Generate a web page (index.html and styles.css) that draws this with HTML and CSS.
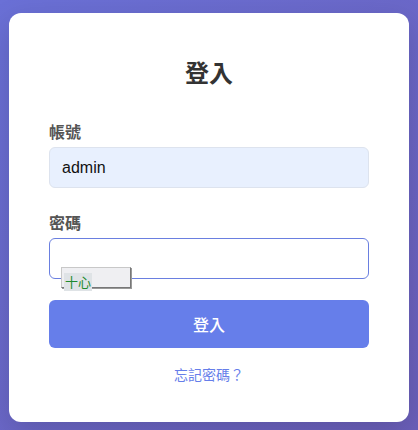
FILE: index.html
```html
<!DOCTYPE html>
<html lang="zh-Hant">
<head>
<meta charset="utf-8">
<title>登入</title>
<link rel="stylesheet" href="styles.css">
</head>
<body>
<div class="card">
  <h1 class="title">登入</h1>
  <div class="group">
    <label class="label">帳號</label>
    <div class="input autofill">admin</div>
  </div>
  <div class="group pw">
    <label class="label">密碼</label>
    <div class="input focus"></div>
    <div class="ime"><span class="ime-text">十心</span></div>
  </div>
  <div class="btn">登入</div>
  <div class="forgot"><a class="link">忘記密碼？</a></div>
</div>
</body>
</html>
```
FILE: styles.css
```css
* { box-sizing: border-box; }
html, body { margin: 0; padding: 0; }
body {
  width: 418px;
  height: 430px;
  overflow: hidden;
  background: linear-gradient(135deg, #6a70d6 0%, #6b5fba 100%);
  font-family: "Noto Sans CJK TC", "Noto Sans", sans-serif;
  padding: 13px 9px 0 9px;
}
.card {
  width: 400px;
  height: 409px;
  background: #fff;
  border-radius: 12px;
  padding: 40px 40px 0 40px;
  box-shadow: 0 10px 30px rgba(0,0,0,0.15);
}
.title {
  margin: 0;
  text-align: center;
  font-size: 24px;
  font-weight: 700;
  color: #333;
  line-height: 38px;
}
.group { margin-top: 29px; position: relative; }
.group.pw { margin-top: 23px; }
.label {
  display: block;
  font-size: 16px;
  font-weight: 700;
  color: #555;
  line-height: 22px;
  margin-bottom: 5px;
}
.input {
  width: 320px;
  height: 41px;
  border: 1px solid #dcdfe6;
  border-radius: 6px;
  padding: 0 12px;
  font-family: "Liberation Sans", Arial, sans-serif;
  font-size: 16px;
  line-height: 39px;
  color: #111;
  background: #fff;
}
.input.autofill { background: #e8f0fe; border-color: #dde3ee; }
.input.focus { border-color: #6a7fe0; }
.ime {
  position: absolute;
  left: 12px;
  top: 240px;
  top: auto;
  bottom: -9px;
  width: 70px;
  height: 21px;
  background: #efeff2;
  border: 1px solid #c8c8c8;
  border-right-color: #777;
  border-bottom-color: #777;
  box-shadow: 1px 1px 0 #999;
  padding-left: 2px;
}
.ime-text {
  display: inline-block;
  font-size: 13px;
  line-height: 18px;
  color: #1e8a2e;
  background: #dfe3e6;
  padding: 0 1px;
}
.btn {
  margin-top: 21px;
  width: 320px;
  height: 48px;
  border-radius: 6px;
  background: #667eea;
  color: #fff;
  font-size: 16px;
  font-weight: 500;
  text-align: center;
  line-height: 48px;
}
.forgot {
  margin-top: 15px;
  text-align: center;
  font-size: 14px;
  line-height: 22px;
}
.link { color: #667eea; text-decoration: none; }
```
